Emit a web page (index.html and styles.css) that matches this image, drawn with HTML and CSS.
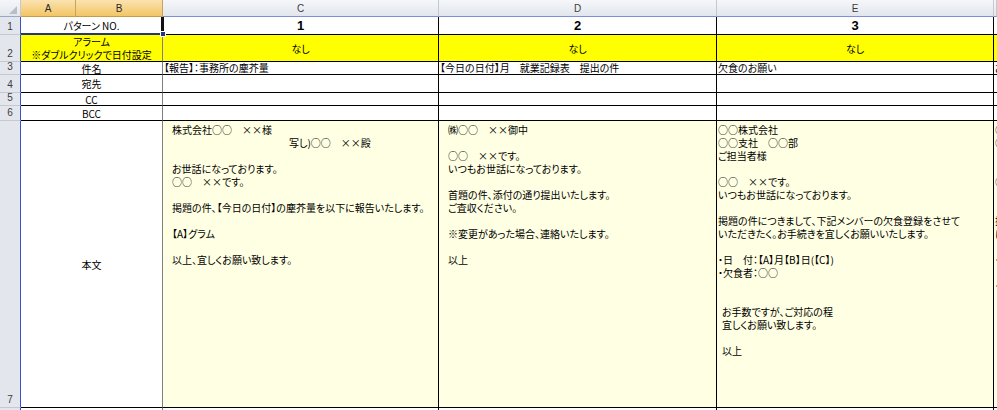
FILE: index.html
```html
<!DOCTYPE html>
<html lang="ja">
<head>
<meta charset="utf-8">
<title>パターン</title>
<link rel="stylesheet" href="styles.css">
</head>
<body>
<div class="sheet">
  <div class="corner"><span class="tri"></span></div>
  <div class="ch sel">A</div>
  <div class="ch sel">B</div>
  <div class="ch">C</div>
  <div class="ch">D</div>
  <div class="ch">E</div>
  <div class="ch"></div>

  <div class="rh">1</div>
  <div class="c ab">パターン NO.</div>
  <div class="c num">1</div>
  <div class="c num">2</div>
  <div class="c num">3</div>
  <div class="c f"></div>

  <div class="rh">2</div>
  <div class="c ab yel"><div>アラーム<br>※ダブルクリックで日付設定</div></div>
  <div class="c mid yel">なし</div>
  <div class="c mid yel">なし</div>
  <div class="c mid yel">なし</div>
  <div class="c f yel"></div>

  <div class="rh">3</div>
  <div class="c ab">件名</div>
  <div class="c subj">【報告】：事務所の塵芥量</div>
  <div class="c subj">【今日の日付】月　就業記録表　提出の件</div>
  <div class="c subj">欠食のお願い</div>
  <div class="c f subj">お知らせ</div>

  <div class="rh">4</div>
  <div class="c ab">宛先</div>
  <div class="c"></div>
  <div class="c"></div>
  <div class="c"></div>
  <div class="c f"></div>

  <div class="rh">5</div>
  <div class="c ab">CC</div>
  <div class="c"></div>
  <div class="c"></div>
  <div class="c"></div>
  <div class="c f"></div>

  <div class="rh">6</div>
  <div class="c ab">BCC</div>
  <div class="c"></div>
  <div class="c"></div>
  <div class="c"></div>
  <div class="c f"></div>

  <div class="rh">7</div>
  <div class="c ab">本文</div>
  <div class="c body pad">
    <div class="ln">株式会社○○　××様</div>
    <div class="ln far">写し)○○　××殿</div>
    <div class="ln"></div>
    <div class="ln">お世話になっております。</div>
    <div class="ln">○○　××です。</div>
    <div class="ln"></div>
    <div class="ln">掲題の件、【今日の日付】の塵芥量を以下に報告いたします。</div>
    <div class="ln"></div>
    <div class="ln">【A】グラム</div>
    <div class="ln"></div>
    <div class="ln">以上、宜しくお願い致します。</div>
  </div>
  <div class="c body pad">
    <div class="ln">㈱○○　××御中</div>
    <div class="ln"></div>
    <div class="ln">○○　××です。</div>
    <div class="ln">いつもお世話になっております。</div>
    <div class="ln"></div>
    <div class="ln">首題の件、添付の通り提出いたします。</div>
    <div class="ln">ご査収ください。</div>
    <div class="ln"></div>
    <div class="ln">※変更があった場合、連絡いたします。</div>
    <div class="ln"></div>
    <div class="ln">以上</div>
  </div>
  <div class="c body">
    <div class="ln">○○株式会社</div>
    <div class="ln">○○支社　○○部</div>
    <div class="ln">ご担当者様</div>
    <div class="ln"></div>
    <div class="ln">○○　××です。</div>
    <div class="ln">いつもお世話になっております。</div>
    <div class="ln"></div>
    <div class="ln">掲題の件につきまして、下記メンバーの欠食登録をさせて</div>
    <div class="ln">いただきたく。お手続きを宜しくお願いいたします。</div>
    <div class="ln"></div>
    <div class="ln">・日　付：【A】月【B】日(【C】)</div>
    <div class="ln">・欠食者：○○</div>
    <div class="ln"></div>
    <div class="ln"></div>
    <div class="ln sp">お手数ですが、ご対応の程</div>
    <div class="ln sp">宜しくお願い致します。</div>
    <div class="ln"></div>
    <div class="ln sp">以上</div>
  </div>
  <div class="c body f">
    <div class="ln">○○様</div>
    <div class="ln">○○</div>
    <div class="ln"></div>
    <div class="ln"></div>
    <div class="ln">○○</div>
    <div class="ln"></div>
    <div class="ln"></div>
    <div class="ln">掲</div>
    <div class="ln">に</div>
    <div class="ln"></div>
    <div class="ln">・</div>
    <div class="ln"></div>
    <div class="ln">・</div>
  </div>

  <div class="rh"></div>
  <div class="c ab"></div>
  <div class="c"></div>
  <div class="c"></div>
  <div class="c"></div>
  <div class="c f"></div>

  <div class="selbox"><span class="handle"></span></div>
</div>
</body>
</html>
```

FILE: styles.css
```css
* { box-sizing: border-box; }

body {
  margin: 0;
  background: #ffffff;
  font-family: "Noto Sans CJK JP", "Noto Sans CJK SC", sans-serif;
  font-size: 10px;
  color: #000;
  font-feature-settings: "palt";
}

.sheet {
  position: relative;
  width: 997px;
  height: 410px;
  overflow: hidden;
  display: grid;
  grid-template-columns: 21px 55px 87px 276px 278px 277px 3px;
  grid-template-rows: 17px 18px 27px 13px 18px 13px 15px 287px 30px;
}

.corner {
  position: relative;
  background: linear-gradient(#f4f6f9, #e3e7ed);
  border-right: 1px solid #c4c9d1;
  border-bottom: 1px solid #9aa7c8;
}
.tri {
  position: absolute;
  right: 3px;
  bottom: 2px;
  width: 0;
  height: 0;
  border-left: 8px solid transparent;
  border-bottom: 8px solid #b8bfc9;
}

.ch {
  background: linear-gradient(#f5f7fa, #e2e6ec);
  border-right: 1px solid #c3c8d0;
  border-bottom: 1px solid #7d8fd6;
  font-family: "Liberation Sans", sans-serif;
  font-size: 10px;
  color: #3c3c3c;
  display: flex;
  align-items: center;
  justify-content: center;
  padding-top: 1px;
}
.ch.sel {
  background: linear-gradient(#fae2b0, #f3c665);
  border-right-color: #c9a35e;
  border-bottom-color: #c99a4a;
  color: #2b2b2b;
}

.rh {
  background: #e3e7ed;
  border-right: 1px solid #3a4fd0;
  border-bottom: 1px solid #c4c9d1;
  font-family: "Liberation Sans", sans-serif;
  font-size: 10px;
  color: #3c3c3c;
  display: flex;
  align-items: flex-end;
  justify-content: center;
  padding-bottom: 1px;
  line-height: 12px;
}

.c {
  border-right: 1px solid #000;
  border-bottom: 1px solid #000;
  overflow: hidden;
  white-space: nowrap;
  line-height: 13px;
  background: #fff;
}

.ab {
  grid-column: span 2;
  display: flex;
  align-items: center;
  justify-content: center;
  text-align: center;
  border-right-color: #7f7f7f;
}

.num {
  display: flex;
  align-items: center;
  justify-content: center;
  font-family: "Liberation Sans", sans-serif;
  font-weight: bold;
  font-size: 13px;
}

.mid {
  display: flex;
  align-items: center;
  justify-content: center;
  padding-top: 1px;
}

.yel { background: #ffff00; }

.subj {
  padding-left: 1px;
  line-height: 12px;
}

.body {
  background: #ffffe3;
  padding-top: 2px;
  padding-left: 1px;
}
.body.pad { padding-left: 9px; }

.ln { height: 13px; line-height: 13px; }
.ln.far { padding-left: 117px; }
.ln.sp { padding-left: 4px; }

.f { border-right: none; }

.selbox {
  position: absolute;
  left: 21px;
  top: 17px;
  width: 143px;
  height: 18px;
  border-right: 3px solid #111;
  border-bottom: 2px solid #26367e;
}
.handle {
  position: absolute;
  right: -5px;
  bottom: -4px;
  width: 6px;
  height: 6px;
  background: #26367e;
  border: 1px solid #fff;
}
```
